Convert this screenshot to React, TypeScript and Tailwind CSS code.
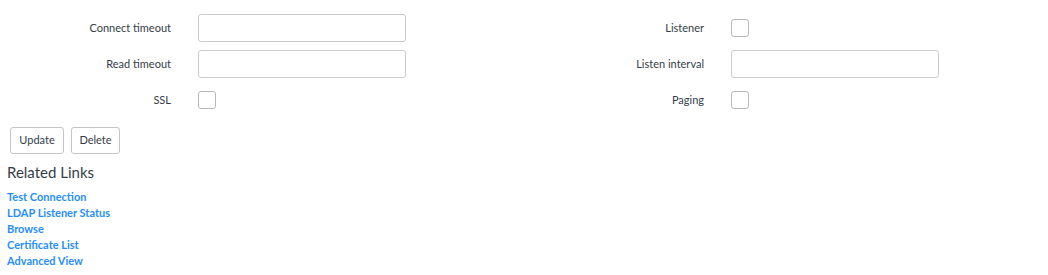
import React from "react";

const font = { fontFamily: "Lato, 'Noto Sans', sans-serif" };

const TextField = () => (
  <input
    type="text"
    className="h-[28px] w-[208px] rounded-[3px] border border-[#cbcbcb] bg-white px-2 text-[12px] outline-none"
  />
);

const Check = () => (
  <span className="block h-[18px] w-[18px] rounded-[3px] border border-[#b8b8b8] bg-white" />
);

const Row = ({ label, children }: { label: string; children: React.ReactNode }) => (
  <div className="flex h-[28px] items-center">
    <label className="w-[171px] text-right text-[11px] text-[#343d47]">{label}</label>
    <div className="ml-[27px] flex items-center">{children}</div>
  </div>
);

export default function App() {
  const links = [
    "Test Connection",
    "LDAP Listener Status",
    "Browse",
    "Certificate List",
    "Advanced View",
  ];

  return (
    <div className="h-[275px] w-[1048px] bg-white" style={font}>
      {/* form fields */}
      <div className="grid grid-cols-[533px_1fr] pt-[14px]">
        <div className="flex flex-col gap-[8px]">
          <Row label="Connect timeout"><TextField /></Row>
          <Row label="Read timeout"><TextField /></Row>
          <Row label="SSL"><Check /></Row>
        </div>
        <div className="flex flex-col gap-[8px]">
          <Row label="Listener"><Check /></Row>
          <Row label="Listen interval"><TextField /></Row>
          <Row label="Paging"><Check /></Row>
        </div>
      </div>

      {/* buttons */}
      <div className="mt-[13px] flex gap-[7px] pl-[10px]">
        <button className="h-[27px] w-[54px] rounded-[3px] border border-[#c5c5c5] bg-white text-[11px] text-[#343d47]">
          Update
        </button>
        <button className="h-[27px] w-[49px] rounded-[3px] border border-[#c5c5c5] bg-white text-[11px] text-[#343d47]">
          Delete
        </button>
      </div>

      {/* related links */}
      <div className="pl-[7px]">
        <h3 className="mt-[8px] text-[15px] leading-[20px] text-[#343d47]">Related Links</h3>
        <ul className="mt-[7px] flex flex-col">
          {links.map((l) => (
            <li key={l} className="text-[11px] font-bold leading-[16px] text-[#278efc]">
              <a href="#">{l}</a>
            </li>
          ))}
        </ul>
      </div>
    </div>
  );
}
